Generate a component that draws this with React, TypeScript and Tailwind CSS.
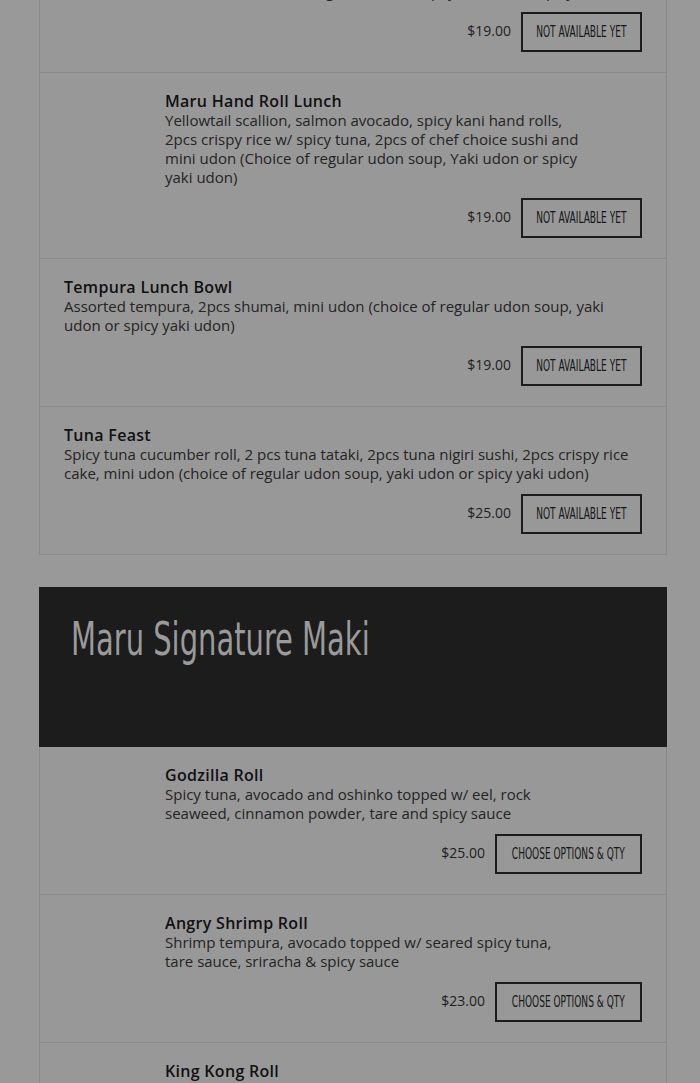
import React from "react";

type Item = {
  name?: string;
  desc: string;
  price: string;
  action: string;
  image?: boolean;
};

const lunch: Item[] = [
  {
    desc: "Salmon, tuna, yellowtail sashimi, mini udon (choice of regular udon soup, yaki udon or spicy yaki udon)",
    price: "$19.00",
    action: "NOT AVAILABLE YET",
    image: true,
  },
  {
    name: "Maru Hand Roll Lunch",
    desc: "Yellowtail scallion, salmon avocado, spicy kani hand rolls, 2pcs crispy rice w/ spicy tuna, 2pcs of chef choice sushi and mini udon (Choice of regular udon soup, Yaki udon or spicy yaki udon)",
    price: "$19.00",
    action: "NOT AVAILABLE YET",
    image: true,
  },
  {
    name: "Tempura Lunch Bowl",
    desc: "Assorted tempura, 2pcs shumai, mini udon (choice of regular udon soup, yaki udon or spicy yaki udon)",
    price: "$19.00",
    action: "NOT AVAILABLE YET",
  },
  {
    name: "Tuna Feast",
    desc: "Spicy tuna cucumber roll, 2 pcs tuna tataki, 2pcs tuna nigiri sushi, 2pcs crispy rice cake, mini udon (choice of regular udon soup, yaki udon or spicy yaki udon)",
    price: "$25.00",
    action: "NOT AVAILABLE YET",
  },
];

const maki: Item[] = [
  {
    name: "Godzilla Roll",
    desc: "Spicy tuna, avocado and oshinko topped w/ eel, rock seaweed, cinnamon powder, tare and spicy sauce",
    price: "$25.00",
    action: "CHOOSE OPTIONS & QTY",
    image: true,
  },
  {
    name: "Angry Shrimp Roll",
    desc: "Shrimp tempura, avocado topped w/ seared spicy tuna, tare sauce, sriracha & spicy sauce",
    price: "$23.00",
    action: "CHOOSE OPTIONS & QTY",
    image: true,
  },
  {
    name: "King Kong Roll",
    desc: "Shrimp tempura, spicy kani, avocado topped w/ torched salmon, tare and spicy mayo",
    price: "$24.00",
    action: "CHOOSE OPTIONS & QTY",
    image: true,
  },
];

const sans = { fontFamily: "'Open Sans', 'Noto Sans', sans-serif" };
const cond = { fontFamily: "'DejaVu Sans Condensed', 'DejaVu Sans', sans-serif", fontStretch: "condensed" };

const Row = ({ item, first }: { item: Item; first?: boolean }) => (
  <div
    className={
      "flex flex-col px-6 pb-5 border-t border-[#8a8a8a] first:border-t-0 " +
      (first ? "pt-0" : "pt-[19px]")
    }
  >
    <div className={item.image ? "pl-[101px]" : ""}>
      <div className={item.image ? "max-w-[416px]" : ""}>
        {item.name && (
          <div className="text-[16px] leading-[19px] font-semibold tracking-[0.3px] text-[#111]">{item.name}</div>
        )}
        <div
          className={
            "text-[15px] leading-[19px] text-[#242424] " +
            (first ? "-mt-[18px] h-[19px] overflow-hidden" : "")
          }
        >
          {first ? "mini udon (choice of regular udon soup, yaki udon or spicy yaki udon)" : item.desc}
        </div>
      </div>
    </div>
    <div className="flex items-center justify-end gap-[10px] mt-[11px]">
      <span className="text-[14px] text-[#1e1e1e] -mt-[3px]">{item.price}</span>
      <button
        className={
          "h-10 border-2 border-[#1c1c1c] flex items-center justify-center overflow-hidden " +
          (item.action.startsWith("NOT") ? "w-[121px]" : "w-[147px]")
        }
      >
        <span style={cond} className="inline-block text-[15px] text-[#161616] scale-x-[0.67] whitespace-nowrap">
          {item.action}
        </span>
      </button>
    </div>
  </div>
);

export default function App() {
  return (
    <div style={sans} className="min-h-screen bg-[#999999] pl-[39px] overflow-hidden h-[1083px]">
      <div className="w-[628px]">
        <div className="border border-t-0 border-[#8a8a8a] bg-[#989898]">
          {lunch.map((it, i) => (
            <Row key={i} item={it} first={i === 0} />
          ))}
        </div>
        <div className="mt-8 h-[160px] bg-[#1c1c1d] px-8 pt-[22px]">
          <div
            style={cond}
            className="inline-block origin-left scale-x-[0.7] text-[46px] leading-[60px] text-[#9a9a9a] whitespace-nowrap"
          >
            Maru Signature Maki
          </div>
        </div>
        <div className="border border-t-0 border-[#8a8a8a] bg-[#989898]">
          {maki.map((it, i) => (
            <Row key={i} item={it} />
          ))}
        </div>
      </div>
    </div>
  );
}
